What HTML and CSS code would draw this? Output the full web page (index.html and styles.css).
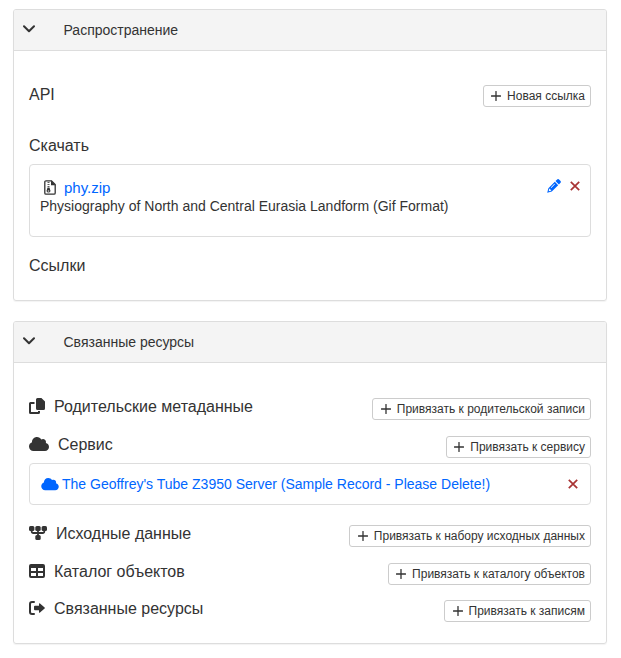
FILE: index.html
```html
<!DOCTYPE html>
<html lang="ru">
<head>
<meta charset="utf-8">
<title>Ресурсы</title>
<link rel="stylesheet" href="styles.css">
</head>
<body>
<svg class="defs" aria-hidden="true">
  <symbol id="chevron" viewBox="0 0 12 8"><path d="M1 1.200 6 6.200 11 1.200" fill="none" stroke="currentColor" stroke-width="2" stroke-linecap="round" stroke-linejoin="round"/></symbol>
  <symbol id="plus" viewBox="0 0 10 10"><path d="M5 .5v9M.5 5h9" fill="none" stroke="currentColor" stroke-width="1.300" stroke-linecap="round"/></symbol>
  <symbol id="cross" viewBox="0 0 10 10"><path d="M.8.8 9.200 9.200M9.200.8.8 9.200" fill="none" stroke="currentColor" stroke-width="1.700"/></symbol>
  <symbol id="cloud" viewBox="0 0 640 512"><path fill="currentColor" d="M0 336c0 79.500 64.500 144 144 144h368c70.700 0 128-57.300 128-128 0-61.900-44-113.600-102.400-125.400 4.100-10.700 6.400-22.400 6.400-34.600 0-53-43-96-96-96-19.700 0-38.100 6-53.300 16.200C367 64.200 315.300 32 256 32c-88.400 0-160 71.600-160 160 0 2.700.1 5.400.2 8.100C40.200 219.800 0 273.200 0 336z"/></symbol>
</svg>

<section class="panel distribution">
  <header class="panel-head"><svg class="chevron"><use href="#chevron"/></svg><span>Распространение</span></header>
  <div class="panel-body">
    <div class="row row-api"><h2>API</h2><button><svg><use href="#plus"/></svg><span>Новая ссылка</span></button></div>
    <h2 class="download">Скачать</h2>
    <div class="card file-card">
      <div class="file-line">
        <svg class="zip" viewBox="0 0 12 15"><path d="M2 .8h5.500l3.700 3.700V13a1.200 1.200 0 0 1-1.200 1.200H2A1.200 1.200 0 0 1 .8 13V2A1.200 1.200 0 0 1 2 .8z" fill="#fff" stroke="#333" stroke-width="1.300"/><path d="M7 .5v4.700h4.500z" fill="#333"/><path d="M3.500 2.500h2M3.500 4.500h2M3.500 6.500h2" stroke="#333" stroke-width=".8"/><path fill-rule="evenodd" fill="#333" d="M3.500 7.500h2l1 3.400a2.050 2.050 0 0 1-4 0zM3.800 10.500h1.400v1H3.800z"/></svg>
        <a class="file-name">phy.zip</a>
        <svg class="pencil" viewBox="0 0 14 14"><path fill="currentColor" fill-rule="evenodd" d="M9.900.7a1.700 1.700 0 0 1 2.400 0l1 1a1.700 1.700 0 0 1 0 2.400l-1.400 1.400-3.400-3.400zM7.800 2.800l3.400 3.400-6.400 6.400L.2 13.800l1.200-4.600zM2.300 9.800l-.6 2.500 2.400-.6v-1H3.200v-.9zM4.300 8.900l3.600-3.700-.5-.5-3.600 3.700z"/></svg>
        <svg class="cross"><use href="#cross"/></svg>
      </div>
      <p>Physiography of North and Central Eurasia Landform (Gif Format)</p>
    </div>
    <h2 class="links">Ссылки</h2>
  </div>
</section>

<section class="panel related">
  <header class="panel-head"><svg class="chevron"><use href="#chevron"/></svg><span>Связанные ресурсы</span></header>
  <div class="panel-body">
    <div class="row row-parent">
      <svg class="i16" viewBox="0 0 16 16"><path fill="currentColor" d="M8.500 0h3.900L16 3.600V10.500a1.500 1.500 0 0 1-1.500 1.500h-6A1.500 1.500 0 0 1 7 10.500v-9A1.500 1.500 0 0 1 8.500 0zM1.500 4H5.500v2H2v8h7v-1h2v1.500A1.500 1.500 0 0 1 9.500 16h-8A1.500 1.500 0 0 1 0 14.500v-9A1.500 1.500 0 0 1 1.500 4z"/></svg>
      <h2>Родительские метаданные</h2><button><svg><use href="#plus"/></svg><span>Привязать к родительской записи</span></button>
    </div>
    <div class="row row-service">
      <svg class="i20"><use href="#cloud"/></svg>
      <h2>Сервис</h2><button><svg><use href="#plus"/></svg><span>Привязать к сервису</span></button>
    </div>
    <div class="card service-card"><svg class="blue-cloud"><use href="#cloud"/></svg><a>The Geoffrey's Tube Z3950 Server (Sample Record - Please Delete!)</a><svg class="cross"><use href="#cross"/></svg></div>
    <div class="row row-source">
      <svg class="i18" viewBox="0 0 18 16"><g fill="currentColor"><rect x="0" y="1" width="5.400" height="5" rx="1.500"/><rect x="6.300" y="1" width="5.400" height="5" rx="1.500"/><rect x="12.600" y="1" width="5.400" height="5" rx="1.500"/><rect x="6.300" y="10" width="5.400" height="5" rx="1.500"/></g><path d="M2.700 5v1.500A1.500 1.500 0 0 0 4.200 8h9.600a1.500 1.500 0 0 0 1.500-1.500V5M9 5v6" fill="none" stroke="currentColor" stroke-width="1.800"/></svg>
      <h2>Исходные данные</h2><button><svg><use href="#plus"/></svg><span>Привязать к набору исходных данных</span></button>
    </div>
    <div class="row row-catalog">
      <svg class="i16" viewBox="0 0 16 16"><path fill="currentColor" fill-rule="evenodd" d="M2 1h12a2 2 0 0 1 2 2v10a2 2 0 0 1-2 2H2a2 2 0 0 1-2-2V3a2 2 0 0 1 2-2zM2 5v3h5V5zM9 5v3h5V5zM2 10v3h5v-3zM9 10v3h5v-3z"/></svg>
      <h2>Каталог объектов</h2><button><svg><use href="#plus"/></svg><span>Привязать к каталогу объектов</span></button>
    </div>
    <div class="row row-records">
      <svg class="i16" viewBox="0 0 16 16"><path d="M5 2H3a2 2 0 0 0-2 2v8a2 2 0 0 0 2 2h2" fill="none" stroke="currentColor" stroke-width="2" stroke-linecap="round"/><path fill="currentColor" d="M6 5.800h4V4q0-1.300 1-.6l4.600 4q.6.600 0 1.200l-4.600 4q-1 .7-1-.6v-1.800H6a1 1 0 0 1-1-1V6.800a1 1 0 0 1 1-1z"/></svg>
      <h2>Связанные ресурсы</h2><button><svg><use href="#plus"/></svg><span>Привязать к записям</span></button>
    </div>
  </div>
</section>
</body>
</html>
```
FILE: styles.css
```css
* { box-sizing: border-box; }
body { margin: 0; padding: 9px 14px 0 13px; background: #fff; color: #333; font: 14px/18px "Liberation Sans", Arial, sans-serif; }
.defs { display: none; }
svg { flex: none; display: block; }
h2, p { margin: 0; font-weight: 400; white-space: nowrap; }
h2 { font-size: 16px; line-height: 20px; }
.panel { border: 1px solid #ddd; border-radius: 3px; box-shadow: 0 1px 1px rgba(0,0,0,.05); margin-bottom: 20px; }
.distribution { height: 292px; }
.related { height: 323px; }
.panel-head { height: 41px; background: #f4f4f4; border-bottom: 1px solid #ddd; border-radius: 2px 2px 0 0; display: flex; align-items: center; padding: 0 9px; }
.chevron { width: 12px; height: 8px; margin: -3px 28.500px 0 0; }
.panel-body { padding: 34px 15px 0; }
.related .panel-body { padding-top: 35px; }
.row { display: flex; align-items: center; height: 22px; }
.row h2 { margin-top: -4px; }
.row-api h2 { margin-top: -2px; }
.row > svg { height: 16px; margin-top: -6px; }
.i16 { width: 16px; margin-right: 9px; }
.i18 { width: 18px; margin-right: 9px; }
.i20 { width: 20px; margin-right: 9px; }
button { margin-left: auto; height: 22px; border: 1px solid #ccc; border-radius: 3px; background: #fff; color: #333; font: 12px/18px "Liberation Sans", Arial, sans-serif; padding: 0 5px 0 7.500px; display: flex; align-items: center; white-space: nowrap; }
button svg { width: 10px; height: 10px; margin-right: 6px; }
.download { margin-top: 29px; }
.card { border: 1px solid #ddd; border-radius: 4px; }
.file-card { height: 73px; margin-top: 8px; padding: 14px 10px; }
.file-line { height: 18px; display: flex; align-items: center; }
.zip { width: 12px; height: 15px; margin: -1px 8px 0 4px; }
a { color: #06f; text-decoration: none; white-space: nowrap; }
.file-name { font-size: 15px; }
.pencil { width: 14px; height: 14px; margin: -4px 9px 0 auto; color: #06f; }
.cross { width: 10px; height: 10px; color: #a93434; }
.file-line .cross { margin-top: -4px; }
.links { margin-top: 19px; }
.row-service { margin-top: 16px; }
.service-card { height: 42px; margin: 5px 0 20px; display: flex; align-items: center; padding: 0 12px 0 11px; }
.blue-cloud { width: 18px; height: 14px; color: #06f; margin-right: 3px; }
.service-card .cross { margin-left: auto; }
.row-catalog { margin-top: 16px; }
.row-records { margin-top: 15px; }
```
